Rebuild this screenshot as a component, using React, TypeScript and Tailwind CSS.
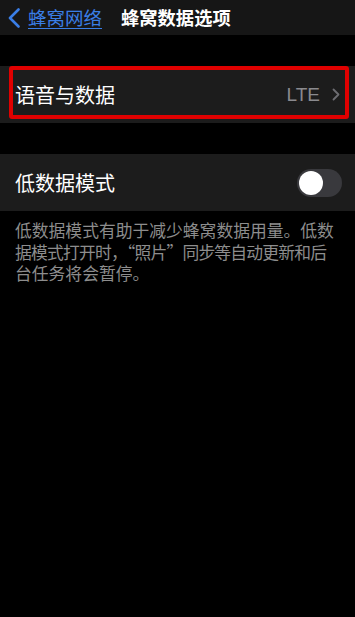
export default function App() {
  const cjk = { fontFamily: '"Noto Sans CJK SC", "Noto Sans", sans-serif' };
  return (
    <div className="w-[355px] h-[617px] bg-black overflow-hidden" style={cjk}>
      {/* nav bar */}
      <div className="h-[35px] bg-[#161616] flex items-center">
        <svg width="14" height="20" viewBox="0 0 14 20" className="ml-[7px]">
          <path d="M11.5 1.5 L3 10 L11.5 18.5" fill="none" stroke="#3a7ee6" strokeWidth="2.6" strokeLinecap="round" strokeLinejoin="round" />
        </svg>
        <span className="ml-[7px] text-[18.5px] leading-none text-[#3a7ee6] underline underline-offset-[3px] decoration-1">蜂窝网络</span>
        <span className="ml-[19px] text-[18.3px] leading-none text-white font-bold">蜂窝数据选项</span>
      </div>

      <div className="h-[31px]" />

      {/* voice & data row */}
      <div className="relative h-[57px] bg-[#1c1c1c] flex items-center pl-[15px] pr-[15px]">
        <span className="text-[20px] text-white leading-none">语音与数据</span>
        <div className="ml-auto flex items-center gap-[12px]">
          <span className="text-[19px] text-[#8a8a8e] leading-none" style={{ fontFamily: '"Liberation Sans", Arial, sans-serif' }}>LTE</span>
          <svg width="8" height="13" viewBox="0 0 8 13">
            <path d="M1.5 1.5 L6.5 6.5 L1.5 11.5" fill="none" stroke="#6d6d72" strokeWidth="1.8" strokeLinecap="round" strokeLinejoin="round" />
          </svg>
        </div>
        <div className="absolute left-[9px] top-0 w-[340px] h-[53px] border-[4px] border-[#e00000] rounded-[3px]" />
      </div>

      <div className="h-[31px]" />

      {/* low data mode row */}
      <div className="h-[57px] bg-[#1c1c1c] flex items-center pl-[15px] pr-[13px]">
        <span className="text-[20px] text-white leading-none">低数据模式</span>
        <div className="ml-auto w-[45px] h-[28px] rounded-full bg-[#39393d] p-[2px] flex items-center">
          <div className="w-[24px] h-[24px] rounded-full bg-white" />
        </div>
      </div>

      <div className="px-[15px] pt-[9px] text-[16.8px] leading-[21.5px] text-[#8d8d8d] whitespace-nowrap">
        <div>低数据模式有助于减少蜂窝数据用量。低数</div>
        <div className="tracking-[-0.8px]">据模式打开时，“照片”同步等自动更新和后</div>
        <div>台任务将会暂停。</div>
      </div>
    </div>
  );
}
